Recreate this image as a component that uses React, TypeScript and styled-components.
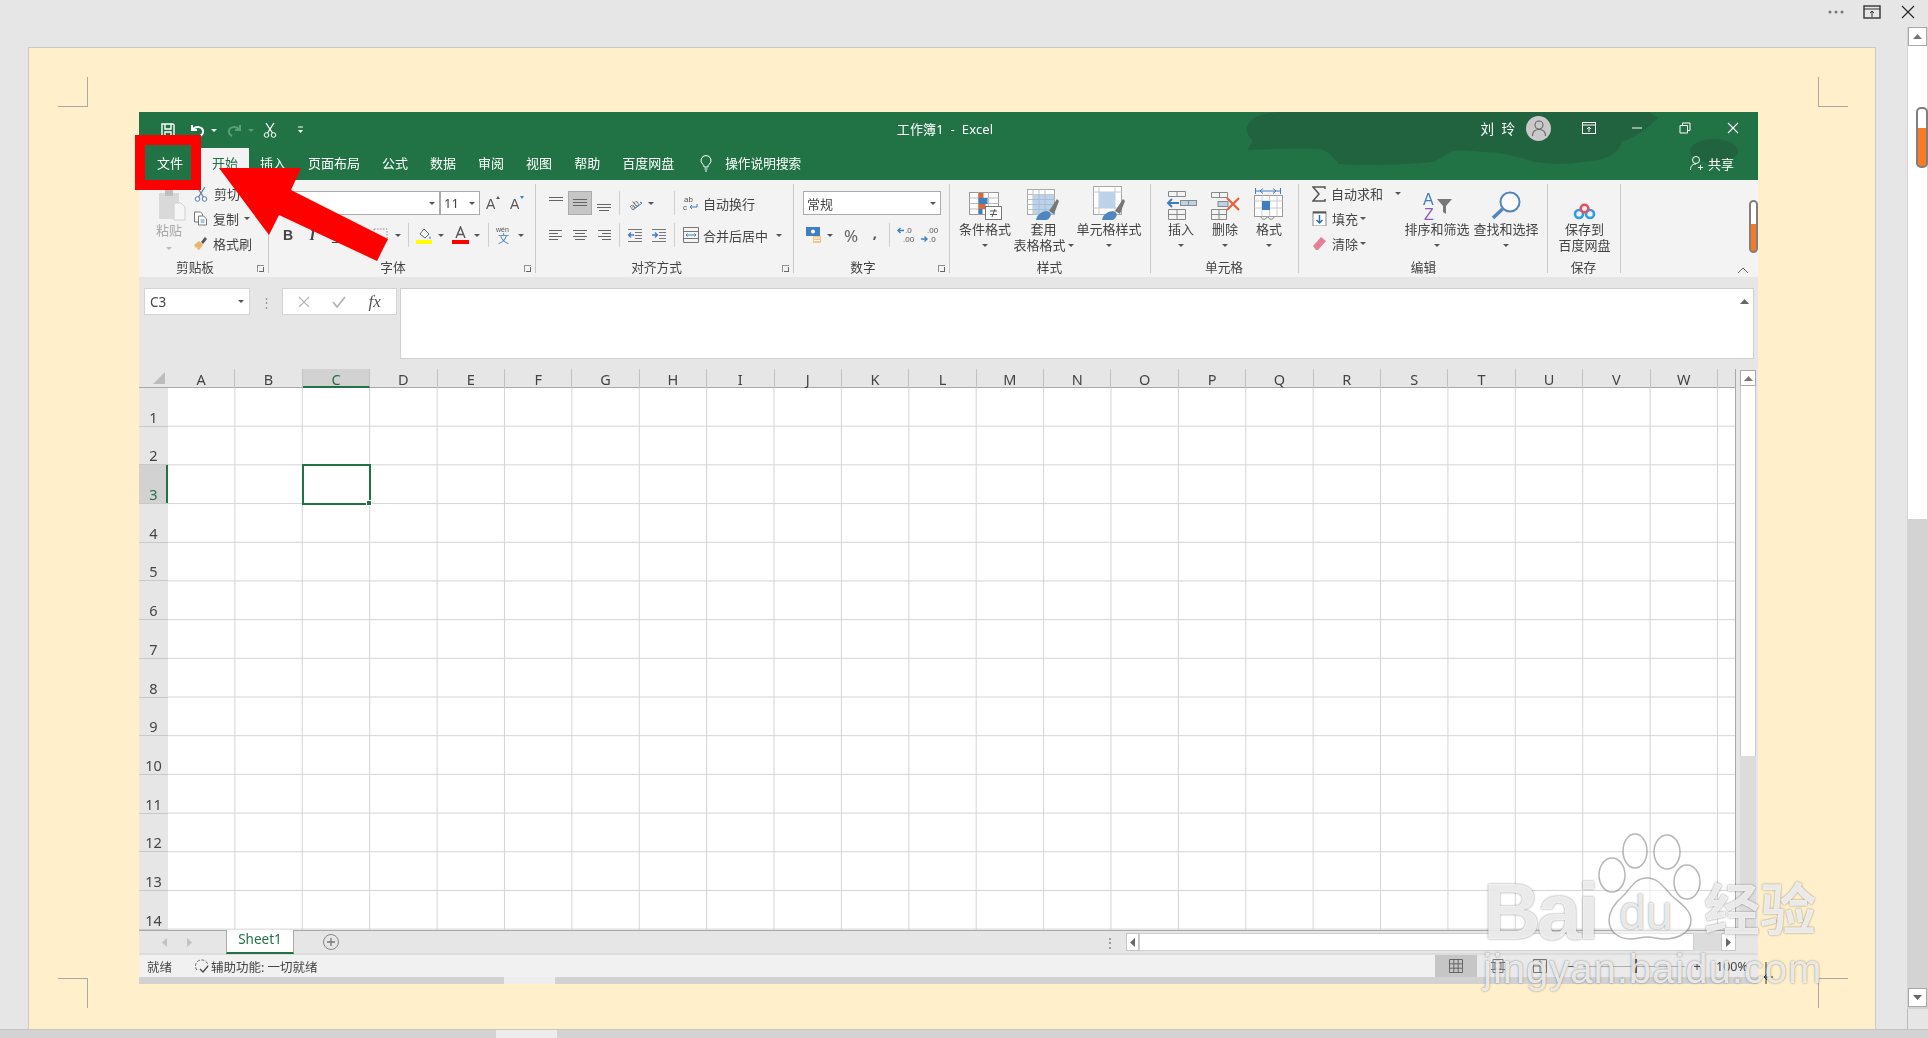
import React from "react";
import styled, { createGlobalStyle } from "styled-components";

const Global = createGlobalStyle`
  html, body { margin: 0; padding: 0; width: 1928px; height: 1038px; overflow: hidden; background: #e6e6e6; }
  body { font-family: "Noto Sans", "Noto Sans CJK SC", sans-serif; }
  svg { display: block; flex: none; }
`;

const Page = styled.div`position: relative; width: 1928px; height: 1038px; display: flex; flex-direction: column; background: #e6e6e6; overflow: hidden;`;
const WinBar = styled.div`height: 47px; display: flex; justify-content: flex-end; align-items: flex-start; padding-top: 4px; box-sizing: border-box;`;
const WinSlot = styled.div<{ $w: number }>`width: ${p => p.$w}px; height: 16px; display: flex; align-items: center; justify-content: center;`;
const Main = styled.div`height: 982px; display: flex;`;
const Gutter = styled.div`width: 28px;`;
const Doc = styled.div`
  position: relative; width: 1848px; box-sizing: border-box; height: 982px; background: #fff0cb;
  border: 1px solid #c8c8c8; border-width: 1px 1px 0 1px; padding: 64px 0 0 110px;
`;
const Mark = styled.div<{ $l: number; $t: number; $bl?: boolean; $br?: boolean; $bt?: boolean; $bb?: boolean }>`
  position: absolute; left: ${p => p.$l}px; top: ${p => p.$t}px; width: 30px; height: 30px; box-sizing: border-box;
  border: 0 solid #aaa9a6;
  ${p => p.$bl && "border-left-width: 1px;"} ${p => p.$br && "border-right-width: 1px;"}
  ${p => p.$bt && "border-top-width: 1px;"} ${p => p.$bb && "border-bottom-width: 1px;"}
`;
const RightGutter = styled.div`width: 31px; border-right: 1px solid #b9b9b9; box-sizing: content-box; margin-right: -1px;`;
const OuterScroll = styled.div`position: relative; width: 21px; height: 982px; box-sizing: border-box; display: flex; flex-direction: column; margin-top: -20px; background: #d3d3d3; padding: 0 0 2px 1px;`;
const OuterTrack = styled.div`height: 473px; width: 19px; background: #fff;`;
const ScrollBtn = styled.div<{ $w: number; $h: number }>`width: ${p => p.$w}px; height: ${p => p.$h}px; background: #fff; border: 1px solid #a8a8a8; box-sizing: border-box; display: flex; align-items: center; justify-content: center; flex: none;`;
const Spacer = styled.div`flex: 1;`;
const OrangeThumb = styled.div<{ $l: number; $t: number; $w: number; $h: number; $fill: number }>`
  position: absolute; left: ${p => p.$l}px; top: ${p => p.$t}px; width: ${p => p.$w}px; height: ${p => p.$h}px; box-sizing: border-box;
  border: 2px solid #7f7f7f; border-radius: 5px; background: linear-gradient(#fff ${p => p.$fill}%, #f97a24 ${p => p.$fill}%);
`;
const BottomBar = styled.div`position: absolute; left: 0; right: 0; bottom: 0; height: 9px; background: #d3d3d3; border-top: 1px solid #c4c4c4; box-sizing: border-box;`;
const BottomThumb = styled.div`width: 61px; height: 100%; margin-left: 496px; background: #ececec;`;

const Excel = styled.div`
  width: 1619px; height: 872px; display: flex; flex-direction: column; filter: blur(0.35px); background: #e6e6e6;
  color: #444;
`;
const Head = styled.div`position: relative; height: 68px; background: #217346; color: #fff;`;
const Blob = styled.svg`position: absolute; left: 1091px; top: 0; pointer-events: none;`;
const TitleRow = styled.div`position: relative; height: 36px; display: flex; align-items: center; font-size: 13px;`;
const Qat = styled.div`display: flex; align-items: center; padding-left: 19px; width: 560px; box-sizing: border-box;`;
const Title = styled.div`width: 492px; text-align: center; font-size: 13px; letter-spacing: .1px; margin-top: -4px; white-space: pre;`;
const TitleRight = styled.div`flex: 1; display: flex; align-items: center; justify-content: flex-end; padding-right: 1px; margin-top: -4px;`;
const UserName = styled.div`font-size: 13.5px; letter-spacing: 2px; margin-right: 9px;`;
const Avatar = styled.div`width: 25px; height: 25px; border-radius: 50%; background: #c9c9c9; display: flex; align-items: center; justify-content: center; margin-right: 14px;`;
const Slot = styled.div<{ $w: number; $ml?: number }>`width: ${p => p.$w}px; margin-left: ${p => p.$ml ?? 0}px; height: 100%; flex: none; display: flex; align-items: center; justify-content: center; color: #444;`;
const WhiteSlot = styled(Slot)`color: #fff; height: 24px;`;
const TabRow = styled.div`position: relative; height: 32px; display: flex; align-items: stretch; padding-left: 7px; font-size: 13px;`;
const Tab = styled.div<{ $active?: boolean; $mr?: number }>`
  padding: 0 11px 3px; display: flex; align-items: center; margin-right: ${p => p.$mr ?? 0}px;
  ${p => p.$active ? "background: #f3f3f3; color: #217346;" : ""}
`;
const Tell = styled.div`display: flex; align-items: center; margin-left: 14px; gap: 12px; font-size: 12.7px; padding-bottom: 3px;`;
const Share = styled.div`margin-left: auto; margin-right: 24px; display: flex; align-items: center; gap: 3px; font-size: 13px; padding-bottom: 2px;`;

const Ribbon = styled.div`position: relative; height: 97px; background: #f3f3f3; display: flex; box-sizing: border-box;`;
const Group = styled.div<{ $w: number }>`
  position: relative; width: ${p => p.$w}px; flex: none; box-sizing: border-box; display: flex; flex-direction: column;
  &::after { content: ""; position: absolute; right: 0; top: 4px; bottom: 4px; width: 1px; background: #c9c9c9; }
`;
const GroupBody = styled.div<{ $pl?: number }>`flex: 1; min-height: 0; display: flex; padding-left: ${p => p.$pl ?? 0}px;`;
const GroupLabel = styled.div<{ $pr?: number }>`height: 17px; line-height: 15px; padding-right: ${p => p.$pr ?? 0}px; text-align: center; font-size: 12.7px; color: #444;`;
const Launcher = styled.div`position: absolute; right: 5px; bottom: 5px; width: 7px; height: 7px; border: 1px solid #8f8f8f; box-sizing: border-box; border-width: 1px 0 0 1px; &::after { content: ""; position: absolute; right: 0; bottom: 0; width: 4px; height: 4px; border: solid #666; border-width: 0 1px 1px 0; }`;
const Caret = styled.span<{ $c?: string; $ml?: number; $mt?: number }>`display: inline-block; flex: none; width: 0; height: 0; margin-left: ${p => p.$ml ?? 0}px; margin-top: ${p => p.$mt ?? 0}px; border: 3px solid transparent; border-top: 3px solid ${p => p.$c ?? "#555"}; border-bottom: 0;`;
const PasteCol = styled.div`width: 38px; display: flex; flex-direction: column; align-items: center; padding: 9px 10px 0 0; box-sizing: border-box; color: #a8a8a8; font-size: 13px; line-height: 18px;`;
const SmallCol = styled.div<{ $w?: number }>`display: flex; flex-direction: column; padding-top: 1px; ${p => p.$w ? `width: ${p.$w}px;` : ""} flex: none;`;
const SmallRow = styled.div`height: 25px; display: flex; align-items: center; gap: 5px; font-size: 13px; color: #444; white-space: nowrap;`;
const Rows = styled.div`display: flex; flex-direction: column; padding-top: 11px; gap: 8px;`;
const ToolRow = styled.div`height: 24px; display: flex; align-items: center; font-size: 13px; white-space: nowrap;`;
const ComboBox = styled.div<{ $w: number; $ml?: number; $end?: boolean }>`
  width: ${p => p.$w}px; margin-left: ${p => p.$ml ?? 0}px; height: 24px; box-sizing: border-box; background: #fff; border: 1px solid #ababab; flex: none;
  display: flex; align-items: center; justify-content: ${p => p.$end ? "flex-end" : "space-between"}; padding: 0 4px 0 3px; font-size: 13px; color: #444;
`;
const Sep = styled.div<{ $ml?: number; $mr?: number }>`width: 1px; height: 24px; background: #cfcfcf; flex: none; margin-left: ${p => p.$ml ?? 0}px; margin-right: ${p => p.$mr ?? 0}px;`;
const Selected = styled(Slot)`background: #c6c6c6; border: 1px solid #ababab; box-sizing: border-box;`;
const BoldB = styled.b`font-family: "Liberation Sans", sans-serif; font-size: 14px;`;
const ItalicI = styled.i`font-family: "Liberation Serif", serif; font-size: 15px; font-weight: 700;`;
const UnderU = styled.u`font-size: 14px;`;
const Pctg = styled.span`font-size: 17px; color: #666;`;
const Comma = styled.b`font-size: 15px; color: #555; margin-top: -6px;`;
const BigBtn = styled.div<{ $w: number }>`width: ${p => p.$w}px; flex: none; display: flex; flex-direction: column; align-items: center; padding-top: 6px; box-sizing: border-box; font-size: 13px; line-height: 17px; color: #444; white-space: nowrap;`;
const BigIcon = styled.div`height: 34px; display: flex; align-items: flex-end; justify-content: center; margin-bottom: 1px;`;
const BtnLine = styled.div`height: 16.5px; display: flex; align-items: center; justify-content: center; gap: 2px;`;
const RibbonEnd = styled.div`flex: 1;`;
const Collapse = styled.div`position: absolute; right: 9px; bottom: 3px;`;
const FormulaBar = styled.div`height: 92px; display: flex; align-items: flex-start; padding: 11px 0 0 5px; box-sizing: border-box; background: #e6e6e6;`;
const NameBox = styled.div`width: 106px; height: 27px; background: #fff; border: 1px solid #d4d4d4; box-sizing: border-box; display: flex; align-items: center; justify-content: space-between; padding: 0 5px; font-size: 13.5px; color: #444;`;
const Dots = styled.div`width: 32px; height: 27px; display: flex; align-items: center; justify-content: center; color: #999; font-size: 13px;`;
const FxBox = styled.div`width: 115px; height: 27px; background: #fff; border: 1px solid #d4d4d4; box-sizing: border-box; display: flex; align-items: center; justify-content: space-around; padding: 0 4px;`;
const Fx = styled.span`font-family: "Liberation Serif", serif; font-style: italic; font-size: 17px; line-height: 22px; color: #555;`;
const Input = styled.div`width: 1354px; height: 71px; margin-left: 3px; background: #fff; border: 1px solid #cfcfcf; box-sizing: border-box; display: flex; justify-content: flex-end; padding: 9px 4px 0 0;`;
const SheetArea = styled.div`height: 561px; display: flex;`;
const SheetMain = styled.div`width: 1597px; display: flex; flex-direction: column; border-right: 1px solid #a9a9a9; box-sizing: border-box;`;
const ColHead = styled.div`height: 18px; display: flex; border-bottom: 1px solid #a9a9a9; box-sizing: content-box;`;
const Corner = styled.div`width: 29px; flex: none; position: relative; &::after { content: ""; position: absolute; right: 3px; bottom: 3px; border: 6px solid #bcbcbc; border-top-color: transparent; border-left-color: transparent; }`;
const ColCell = styled.div<{ $on?: boolean }>`
  width: 67.4px; flex: none; box-sizing: border-box; text-align: center; font-size: 14.5px; line-height: 20px; height: 19px;
  border-right: 1px solid #c2c2c2;
  ${p => p.$on ? "background: #d2d2d2; color: #217346; border-bottom: 2px solid #217346;" : "color: #444;"}
`;
const SheetBody = styled.div`flex: 1; display: flex; min-height: 0; overflow: hidden;`;
const RowHead = styled.div`width: 29px; flex: none; border-right: 1px solid #a9a9a9; box-sizing: content-box; margin-right: -1px;`;
const RowCell = styled.div<{ $on?: boolean }>`
  height: 38.7px; box-sizing: border-box; display: flex; align-items: flex-end; justify-content: center; font-size: 14.5px; line-height: 17px;
  border-bottom: 1px solid #c9c9c9;
  ${p => p.$on ? "background: #d2d2d2; color: #217346; box-shadow: inset -2px 0 0 #217346;" : "color: #444;"}
`;
const Grid = styled.div`
  position: relative; flex: 1; background-color: #fff;
  background-image: linear-gradient(to right, #d4d4d4 1px, transparent 1px), linear-gradient(to bottom, #d4d4d4 1px, transparent 1px);
  background-size: 67.4px 38.7px; background-position: -1px -1px;
`;
const Cursor = styled.div`position: absolute; left: 133.8px; top: 76.4px; width: 69.4px; height: 40.7px; box-sizing: border-box; border: 2px solid #217346; &::after { content: ""; position: absolute; right: -3px; bottom: -3px; width: 4px; height: 4px; background: #217346; border: 1px solid #fff; box-sizing: content-box; }`;
const VScroll = styled.div`width: 22px; flex: none; padding: 1px 0 0 4px; box-sizing: border-box; display: flex; flex-direction: column;`;
const VTrack = styled.div`width: 16px; height: 370px; background: #fff; border: 1px solid #c9c9c9; border-width: 0 1px; box-sizing: border-box;`;
const VRest = styled.div`width: 16px; flex: 1; background: #dcdcdc;`;
const TabsBar = styled.div`height: 25px; display: flex; align-items: stretch; border-top: 1px solid #a9a9a9; box-sizing: border-box; border-bottom: 2px solid #dcdcdc;`;
const NavArrows = styled.div`width: 87px; display: flex; align-items: center; gap: 18px; padding-left: 22px; box-sizing: border-box;`;
const SheetTab = styled.div`width: 68px; margin-top: -1px; height: 24px; box-sizing: border-box; background: #fff; border: 1px solid #a9a9a9; border-width: 0 1px; border-bottom: 2px solid #217346; color: #217346; font-size: 13.5px; text-align: center; line-height: 19px;`;
const AddSheet = styled.div`margin-left: 28px; display: flex; align-items: center;`;
const HScrollZone = styled.div`margin-left: auto; display: flex; align-items: center; width: 657px; padding-right: 22px; box-sizing: border-box;`;
const HDots = styled.div`width: 18px; margin-right: 7px; color: #777; font-size: 12px; text-align: center;`;
const HBtn = styled.div<{ $w: number }>`width: ${p => p.$w}px; height: 18px; background: #fff; border: 1px solid #c6c6c6; box-sizing: border-box; display: flex; align-items: center; justify-content: center; flex: none;`;
const HThumb = styled.div`width: 555px; height: 18px; background: #fff; border: 1px solid #cfcfcf; box-sizing: border-box;`;
const HRest = styled.div`flex: 1; height: 18px; background: #dcdcdc;`;
const StatusBar = styled.div`height: 22px; background: #f1f1f1; display: flex; align-items: center; font-size: 12.5px; color: #444; padding-left: 8px;`;
const Access = styled.div`display: flex; align-items: center; margin-left: 22px; gap: 1px;`;
const StatusRight = styled.div`margin-left: auto; height: 100%; display: flex; align-items: center; width: 323px; background: #eaeaea;`;
const ViewOn = styled.div`width: 42px; height: 100%; background: #c6c6c6; display: flex; align-items: center; justify-content: center; flex: none;`;
const ZoomTrack = styled.div`position: relative; width: 102px; height: 1px; background: #b0b0b0; margin: 0 5px; flex: none; &::after { content: ""; position: absolute; left: 49px; top: -7px; width: 5px; height: 14px; background: #555; }`;
const Pct = styled.div`font-size: 12.5px; margin-left: 12px; white-space: nowrap;`;
const Strip = styled.div`height: 7px; background: #d2d2d2; padding-left: 365px;`;
const StripThumb = styled.div`width: 51px; height: 100%; background: #eeeeee;`;

const Overlay = styled.div`position: absolute; inset: 0; pointer-events: none;`;
const RedBox = styled.div`position: absolute; left: 135px; top: 135px; width: 66px; height: 55px; border: 10px solid #ff0000; box-sizing: border-box;`;
const ArrowSvg = styled.svg`position: absolute; left: 0; top: 0;`;
const Wm = styled.div<{ $l: number; $t: number; $s: number; $b?: boolean; $ls?: number }>`
  position: absolute; left: ${p => p.$l}px; top: ${p => p.$t}px; font-family: "Liberation Sans", "Noto Sans CJK SC", sans-serif;
  font-size: ${p => p.$s}px; line-height: 1; font-weight: ${p => p.$b ? 700 : 400}; white-space: nowrap; letter-spacing: ${p => p.$ls ?? 0}px;
  color: rgba(255,255,255,.84); text-shadow: 0 0 2px rgba(70,70,70,.7);
`;

/* ---------- icons ---------- */
const Svg: React.FC<{ w: number; h?: number; vb?: string; children: React.ReactNode }> = ({ w, h, vb, children }) => (
  <svg width={w} height={h ?? w} viewBox={vb ?? `0 0 ${w} ${h ?? w}`} fill="none">{children}</svg>
);
const SaveIco = () => <Svg w={16}><path d="M2 2h11l1 1v11H2z M5 2v5h6V2 M5 14v-4h6v4" stroke="#fff" strokeWidth="1.4" /></Svg>;
const UndoIco = ({ c = "#fff" }: { c?: string }) => <Svg w={16}><path d="M2 3v5h5" stroke={c} strokeWidth="2" /><path d="M3 7c3-3 9-2.500 10 1.500 .5 2.500-1 4.500-3 5.500" stroke={c} strokeWidth="2" /></Svg>;
const RedoIco = () => <Svg w={16}><path d="M14 3v5H9" stroke="#5c9c77" strokeWidth="2" /><path d="M13 7C10 4 4 4.500 3 8.500c-.5 2.500 1 4.500 3 5.500" stroke="#5c9c77" strokeWidth="2" /></Svg>;
const CutIco = ({ c = "#fff" }: { c?: string }) => <Svg w={16}><path d="M4 1l6.500 10M12 1L5.500 11" stroke={c} strokeWidth="1.300" /><circle cx="4.500" cy="13" r="2.300" stroke={c} /><circle cx="11.500" cy="13" r="2.300" stroke={c} /></Svg>;
const CustIco = () => <Svg w={7} h={8}><path d="M1 1h5" stroke="#fff" /><path d="M1 4h5L3.500 7z" fill="#fff" /></Svg>;
const LayoutIco = () => <Svg w={14}><rect x=".5" y="1.500" width="13" height="11" stroke="#fff" /><path d="M.5 4h13" stroke="#fff" /><path d="M7 11V6M5 8l2-2 2 2" stroke="#fff" /></Svg>;
const MinIco = () => <Svg w={12}><path d="M1 6h10" stroke="#fff" /></Svg>;
const RestoreIco = () => <Svg w={12}><path d="M1 3.500h7.500V11H1zM3.500 3V1H11v7.500H8.500" stroke="#fff" /></Svg>;
const CloseIco = ({ c = "#fff", s = 12 }: { c?: string; s?: number }) => <Svg w={s}><path d={`M1 1L${s - 1} ${s - 1}M${s - 1} 1L1 ${s - 1}`} stroke={c} strokeWidth="1.100" /></Svg>;
const AvatarIco = () => <Svg w={18}><circle cx="9" cy="6" r="4" stroke="#666" strokeWidth="1.100" /><path d="M2.500 17c0-5 3-6.500 6.500-6.500s6.500 1.500 6.500 6.500" stroke="#666" strokeWidth="1.100" /></Svg>;
const BulbIco = () => <Svg w={14} h={18}><path d="M7 1.500a5 5 0 0 0-3 9c.8.8 1 1.500 1 2.500h4c0-1 .2-1.700 1-2.500a5 5 0 0 0-3-9z" stroke="#fff" /><path d="M5.500 15h3M6 17h2" stroke="#fff" /></Svg>;
const ShareIco = () => <Svg w={16}><circle cx="7" cy="5" r="3.500" stroke="#fff" /><path d="M1.500 15c0-4 2-6 5.500-6" stroke="#fff" /><path d="M11.500 10v5M9 12.500h5" stroke="#fff" /></Svg>;
const PasteIco = () => <Svg w={34} h={32}><rect x="7" y="4" width="20" height="26" fill="#d9d9d9" /><rect x="13" y="1" width="8" height="6" fill="#bdbdbd" /><path d="M22 14h7l4 4v13H22z" fill="#f6f6f6" stroke="#d0d0d0" /></Svg>;
const CopyIco = () => <Svg w={15}><path d="M1.500 1h6l2 2v8h-8z" fill="#fff" stroke="#777" /><path d="M5.500 5h5l3 3v6h-8z" fill="#fff" stroke="#777" /><path d="M7.500 9h4M7.500 11h4" stroke="#4f8fcb" /></Svg>;
const BrushIco = () => <Svg w={15}><path d="M1 9l5-4 4 4-4 5-2-1 1-2-2 1z" fill="#e8b66d" /><path d="M8 6l4-5 2 2-4 5z" fill="#555" /></Svg>;
const BigA = ({ up }: { up?: boolean }) => <Svg w={16}><text x="1" y="14" fontSize="14" fill="#555" fontFamily="Liberation Sans">A</text><path d={up ? "M11 4l2-3 2 3z" : "M11 1l2 3 2-3z"} fill={up ? "#555" : "#3f7fbf"} /></Svg>;
const BorderIco = () => <Svg w={15}><rect x="1" y="1" width="13" height="13" stroke="#888" strokeDasharray="1.500 1.500" /></Svg>;
const FillIco = () => <Svg w={18}><path d="M5 8l4-5 5 5-4 4z" fill="#fff" stroke="#666" /><path d="M15 10c1 1.500 1 3 0 3s-1-1.500 0-3z" fill="#4f8fcb" /><rect x="1" y="14" width="16" height="4" fill="#ffff00" /></Svg>;
const FontColor = () => <Svg w={17} h={18}><path d="M4 12L8.500 1 13 12M5.500 8.500h6" stroke="#555" strokeWidth="1.400" /><rect x="0" y="14" width="17" height="4" fill="#ff0000" /></Svg>;
const WenIco = () => <Svg w={16} h={20}><text x="0" y="7" fontSize="7" fill="#555" fontFamily="Liberation Sans">wén</text><text x="2" y="18" fontSize="11" fill="#3f7fbf" fontFamily="Noto Sans CJK SC">文</text></Svg>;
const Lines = ({ a }: { a: "l" | "c" | "r" | "t" | "m" | "b" }) => {
  const pos: Record<string, number[][]> = {
    t: [[1, 2, 15], [1, 5, 15]], m: [[1, 4, 15], [1, 7, 15], [1, 10, 15]], b: [[1, 9, 15], [1, 12, 15], [3, 15, 13]],
    l: [[1, 3, 14], [1, 6, 10], [1, 9, 14], [1, 12, 10]], c: [[1, 3, 15], [3, 6, 13], [1, 9, 15], [3, 12, 13]], r: [[2, 3, 15], [6, 6, 15], [2, 9, 15], [6, 12, 15]],
  };
  return <Svg w={16}>{pos[a].map(([x, y, e], i) => <path key={i} d={`M${x} ${y + .5}H${e}`} stroke="#666" />)}</Svg>;
};
const OrientIco = () => <Svg w={17}><text x="1" y="12" fontSize="9" fill="#666" transform="rotate(-40 8 8)" fontFamily="Liberation Sans">ab</text><path d="M6 15l9-7-2-1" stroke="#3f7fbf" /></Svg>;
const IndentIco = ({ out }: { out?: boolean }) => <Svg w={16}><path d="M1 2.500h14M8 5.500h7M8 8.500h7M8 11.500h7M1 14.500h14" stroke="#777" /><path d={out ? "M7 8H2m2-2.500L1.500 8 4 10.500" : "M1 8h5M4 5.500L6.500 8 4 10.500"} stroke="#3f7fbf" strokeWidth="1.300" /></Svg>;
const WrapIco = () => <Svg w={16}><text x="1" y="7" fontSize="8" fill="#555" fontFamily="Liberation Sans">ab</text><text x="0" y="15" fontSize="8" fill="#555" fontFamily="Liberation Sans">c</text><path d="M14 9v3H7m2-2l-2 2 2 2" stroke="#3f7fbf" /></Svg>;
const MergeIco = () => <Svg w={17} h={18}><path d="M.5 1.500h15v15H.5zM.5 5.500h15M.5 12.500h15" stroke="#777" /><path d="M3 9h10M4.500 7.500L3 9l1.500 1.500M11.500 7.500L13 9l-1.500 1.500" stroke="#3f7fbf" /></Svg>;
const CurrencyIco = () => <Svg w={18}><rect x="1" y="1" width="14" height="9" fill="#3f7fbf" /><circle cx="8" cy="5.500" r="2" fill="#fff" /><path d="M8 10h8v7H8z" fill="#f0c78a" /><path d="M9 12h6M9 14.500h6" stroke="#fff" /></Svg>;
const DecIco = ({ inc }: { inc?: boolean }) => <Svg w={19} h={18}><text x={inc ? 6 : 8} y="7" fontSize="8" fill="#555" fontFamily="Liberation Sans">{inc ? ".00" : ".0"}</text><text x={inc ? 8 : 6} y="16" fontSize="8" fill="#555" fontFamily="Liberation Sans">{inc ? ".0" : ".00"}</text><path d={inc ? "M0 13h6M3.500 10.500L6 13l-2.500 2.500" : "M7 4.500H1M3.500 2L1 4.500 3.500 7"} stroke="#3f7fbf" strokeWidth="1.400" /></Svg>;
const CondIco = () => <Svg w={33} h={28}><rect x=".5" y=".5" width="29" height="22" fill="#fff" stroke="#999" /><path d="M.5 6h29M.5 11.500h29M.5 17h29M9.500 .5v22M19.500 .5v22" stroke="#bbb" /><rect x="9.500" y="1" width="5" height="5" fill="#d9683a" /><rect x="9.500" y="6" width="9" height="6" fill="#3f7fbf" /><rect x="9.500" y="12" width="7" height="5" fill="#d9683a" /><rect x="9.500" y="17" width="4" height="5" fill="#3f7fbf" /><rect x="16.500" y="14.500" width="16" height="13" fill="#fff" stroke="#777" /><path d="M21 19h7M21 22.500h7M26 17l-3 8" stroke="#555" /></Svg>;
const Brush = ({ x = 0 }: { x?: number }) => <g transform={`translate(${x} 0)`}><path d="M21 22l8-12 2 2-5 13z" fill="#777" /><path d="M8 31c1-6 7-9 11-9 3 1 5 3 3 6-1 1-2 3-4 3z" fill="#4f86c0" /></g>;
const TableIco = () => <Svg w={33} h={31}><rect x=".5" y=".5" width="27" height="25" fill="#fff" stroke="#a8a8a8" /><path d="M.5 5.500h27M.5 10.500h27M.5 15.500h27M.5 20.500h27M6 .5v25M12 .5v25M18 .5v25" stroke="#bfbfbf" /><rect x="6" y="5.500" width="21" height="20" fill="#bcd2e8" /><path d="M6 10.500h21M6 15.500h21M6 20.500h21M12 5.500v20M18 5.500v20" stroke="#a7bed6" /><Brush x={1} /></Svg>;
const StyleIco = () => <Svg w={33} h={34}><rect x=".5" y=".5" width="28" height="28" fill="#fff" stroke="#a8a8a8" /><path d="M.5 6h28M.5 22h28M6 .5v28M22 .5v28" stroke="#c8c8c8" /><rect x="6" y="6" width="16" height="16" fill="#bcd2e8" /><g transform="translate(1 3)"><Brush /></g></Svg>;
const InsertIco = () => <Svg w={31} h={30}><path d="M2.500 1.500h17v5h-17zM11 1.500v5M2.500 19.500h17v10h-17zM2.500 24.500h17M11 19.500v10" stroke="#888" /><rect x="14.500" y="10.500" width="16" height="5" fill="#bcd2e8" stroke="#888" /><path d="M22.500 10.500v5" stroke="#888" /><path d="M13 13H2m4-4l-4 4 4 4" stroke="#3f7fbf" strokeWidth="2" /></Svg>;
const DeleteIco = () => <Svg w={31} h={29}><path d="M1.500 1.500h16v5h-16zM9.500 1.500v5M1.500 18.500h15v10h-15zM1.500 23.500h15M9 18.500v10" stroke="#888" /><rect x="8" y="10.500" width="10" height="5" fill="#bcd2e8" stroke="#888" /><path d="M17 7l12 12M29 7L17 19" stroke="#e8603c" strokeWidth="2.200" /></Svg>;
const FormatIco = () => <Svg w={30} h={32}><path d="M2 3h24M1.500 0v6M26.500 0v6" stroke="#3f7fbf" /><path d="M6 3l3-2.500M6 3l3 2.500M22 3l-3-2.500M22 3l-3 2.500" stroke="#3f7fbf" /><rect x=".5" y="7.500" width="28" height="21" fill="#fff" stroke="#999" /><path d="M.5 13h28M.5 20h28M8 7.500v21M15.500 7.500v21M23 7.500v21" stroke="#ccc" /><rect x="8" y="13" width="8" height="9" fill="#3f7fbf" /><path d="M7 29c1 3 5 3 6 0M14 29c1 3 5 3 6 0" stroke="#888" /></Svg>;
const SigmaIco = () => <Svg w={14} h={16}><path d="M13 3V1H1l6 7-6 7h12v-2" stroke="#555" strokeWidth="1.500" /></Svg>;
const FillDown = () => <Svg w={15}><rect x="1" y="1" width="13" height="14" fill="#fff" stroke="#888" /><path d="M1 1.500h13" stroke="#555" strokeWidth="2" /><path d="M7.500 4v8M4.500 9l3 3 3-3" stroke="#2f6fb0" strokeWidth="1.500" /></Svg>;
const EraseIco = () => <Svg w={15}><path d="M1 10l8-9 5 4-8 9H4z" fill="#e77f97" /></Svg>;
const SortIco = () => <Svg w={29} h={28}><text x="0" y="13" fontSize="16" fill="#3f7fbf" fontFamily="Liberation Sans">A</text><text x="1" y="28" fontSize="16" fill="#8e5bb5" fontFamily="Liberation Sans">Z</text><path d="M14 7h15l-6 7v8l-3-2v-6z" fill="#777" /></Svg>;
const FindIco = () => <Svg w={30} h={29}><circle cx="19" cy="11" r="9.500" fill="#fbfbfb" stroke="#4f86c0" strokeWidth="2" /><path d="M11.500 18L2 27" stroke="#4f86c0" strokeWidth="3.500" /></Svg>;
const CloudIco = () => <Svg w={23} h={17}><circle cx="6" cy="11" r="4" stroke="#2f9be6" strokeWidth="2.600" /><circle cx="17" cy="11" r="4" stroke="#2f9be6" strokeWidth="2.600" /><circle cx="11.500" cy="5.500" r="3.800" stroke="#e8505f" strokeWidth="2.600" /></Svg>;
const Tri = ({ d, c = "#a6a6a6" }: { d: "u" | "d" | "l" | "r"; c?: string }) => {
  const p = { u: "M0 6L4.500 1 9 6z", d: "M0 1l4.500 5L9 1z", l: "M6 0v9L1 4.500z", r: "M1 0v9l5-4.500z" }[d];
  return <Svg w={d === "u" || d === "d" ? 9 : 7} h={d === "u" || d === "d" ? 7 : 9}><path d={p} fill={c} /></Svg>;
};
const AccessIco = () => <Svg w={16}><path d="M3 12A6 6 0 0 1 8 2a6 6 0 0 1 6 6" stroke="#666" strokeDasharray="3 1.500" /><path d="M6 11l3 3 5-6" stroke="#444" strokeWidth="1.200" /></Svg>;
const GridView = () => <Svg w={16}><path d="M1.500 1.500h13v13h-13zM1.500 5.800h13M1.500 10.200h13M5.800 1.500v13M10.200 1.500v13" stroke="#666" /></Svg>;
const PageView = () => <Svg w={16}><path d="M3 1.500h10v13H3zM1 4.500h14M1 11.500h14" stroke="#777" /><rect x="5" y="5" width="6" height="6" stroke="#777" /></Svg>;
const BreakView = () => <Svg w={16}><path d="M1.500 1.500h13v13h-13zM1.500 8h13M8 1.500v13" stroke="#777" /></Svg>;
const AddIco = () => <Svg w={18}><circle cx="9" cy="9" r="7.500" stroke="#888" /><path d="M9 5v8M5 9h8" stroke="#777" strokeWidth="1.300" /></Svg>;

const COLS = "ABCDEFGHIJKLMNOPQRSTUVW".split("");
const ROWS = Array.from({ length: 14 }, (_, i) => i + 1);
const TABS = ["插入", "页面布局", "公式", "数据", "审阅", "视图", "帮助", "百度网盘"];
const PAW = "rgba(255,255,255,.55)";
const PAW_LINE = "rgba(110,110,110,.5)";

export default function App() {
  return (
    <Page>
      <Global />
      <WinBar>
        <WinSlot $w={38}><Svg w={16} h={4}><circle cx="2" cy="2" r="1.500" fill="#777" /><circle cx="8" cy="2" r="1.500" fill="#777" /><circle cx="14" cy="2" r="1.500" fill="#777" /></Svg></WinSlot>
        <WinSlot $w={34}><Svg w={18} h={14}><rect x="1" y="1" width="16" height="12" stroke="#333" strokeWidth="1.400" /><path d="M1 4h16M9 12V6M7 8l2-2 2 2" stroke="#333" /></Svg></WinSlot>
        <WinSlot $w={38}><CloseIco c="#222" s={14} /></WinSlot>
        <WinSlot $w={1} />
      </WinBar>
      <Main>
        <Gutter />
        <Doc>
          <Mark $l={29} $t={29} $br $bb />
          <Mark $l={1789} $t={29} $bl $bb />
          <Mark $l={29} $t={930} $br $bt />
          <Mark $l={1789} $t={930} $bl $bt />
          <Excel>
            <Head>
              <Blob width="530" height="68" viewBox="0 0 530 68" fill="#22633f">
                <path d="M17 15C20 5 32 1 50 0H419L428 6C420 14 408 24 392 30C388 42 378 48 352 50C336 53 318 52 304 50C286 44 270 40 253 40C236 38 226 38 220 40C214 44 208 48 203 50C172 53 136 54 108 52C104 46 100 40 90 37C66 36 40 37 17 38C20 34 22 30 22 28C18 24 16 20 17 15Z" />
                <ellipse cx="484" cy="39" rx="24" ry="12" />
              </Blob>
              <TitleRow>
                <Qat>
                  <WhiteSlot $w={20}><SaveIco /></WhiteSlot>
                  <WhiteSlot $w={18} $ml={11}><UndoIco /></WhiteSlot><Caret $c="#fff" $ml={4} />
                  <WhiteSlot $w={18} $ml={8}><RedoIco /></WhiteSlot><Caret $c="#5c9c77" $ml={5} />
                  <WhiteSlot $w={18} $ml={7}><CutIco /></WhiteSlot>
                  <WhiteSlot $w={10} $ml={16}><CustIco /></WhiteSlot>
                </Qat>
                <Title>工作簿1  -  Excel</Title>
                <TitleRight>
                  <UserName>刘 玲</UserName>
                  <Avatar><AvatarIco /></Avatar>
                  <WhiteSlot $w={48}><LayoutIco /></WhiteSlot>
                  <WhiteSlot $w={48}><MinIco /></WhiteSlot>
                  <WhiteSlot $w={48}><RestoreIco /></WhiteSlot>
                  <WhiteSlot $w={48}><CloseIco /></WhiteSlot>
                </TitleRight>
              </TitleRow>
              <TabRow>
                <Tab $mr={7}>文件</Tab>
                <Tab $active>开始</Tab>
                {TABS.map(t => <Tab key={t}>{t}</Tab>)}
                <Tell><BulbIco />操作说明搜索</Tell>
                <Share><ShareIco />共享</Share>
              </TabRow>
            </Head>
            <Ribbon>
              <Group $w={130}>
                <GroupBody $pl={16}>
                  <PasteCol><PasteIco />粘贴<Caret $c="#bbb" $mt={8} /></PasteCol>
                  <SmallCol>
                    <SmallRow><CutIco c="#5a7fa8" />剪切</SmallRow>
                    <SmallRow><CopyIco />复制<Caret /></SmallRow>
                    <SmallRow><BrushIco />格式刷</SmallRow>
                  </SmallCol>
                </GroupBody>
                <GroupLabel $pr={18}>剪贴板</GroupLabel>
                <Launcher />
              </Group>
              <Group $w={267}>
                <GroupBody>
                  <Rows>
                    <ToolRow>
                      <ComboBox $w={165} $ml={6} $end><Caret /></ComboBox>
                      <ComboBox $w={40}>11<Caret /></ComboBox>
                      <Slot $w={24} $ml={1}><BigA up /></Slot>
                      <Slot $w={24}><BigA /></Slot>
                    </ToolRow>
                    <ToolRow>
                      <Slot $w={24} $ml={7}><BoldB>B</BoldB></Slot>
                      <Slot $w={25}><ItalicI>I</ItalicI></Slot>
                      <Slot $w={24}><UnderU>U</UnderU></Slot>
                      <Slot $w={12}><Caret /></Slot>
                      <Slot $w={22} $ml={8}><BorderIco /></Slot>
                      <Slot $w={11} $ml={1}><Caret /></Slot>
                      <Sep $ml={5} />
                      <Slot $w={24} $ml={3}><FillIco /></Slot>
                      <Slot $w={10}><Caret /></Slot>
                      <Slot $w={24} $ml={2}><FontColor /></Slot>
                      <Slot $w={10}><Caret /></Slot>
                      <Sep $ml={6} />
                      <Slot $w={24} $ml={3}><WenIco /></Slot>
                      <Slot $w={10}><Caret /></Slot>
                    </ToolRow>
                  </Rows>
                </GroupBody>
                <GroupLabel $pr={19}>字体</GroupLabel>
                <Launcher />
              </Group>
              <Group $w={258}>
                <GroupBody>
                  <Rows>
                    <ToolRow>
                      <Slot $w={24} $ml={8}><Lines a="t" /></Slot>
                      <Selected $w={24}><Lines a="m" /></Selected>
                      <Slot $w={24}><Lines a="b" /></Slot>
                      <Sep $ml={3} />
                      <Slot $w={24} $ml={3}><OrientIco /></Slot>
                      <Slot $w={8}><Caret /></Slot>
                      <Sep $ml={19} />
                      <Slot $w={24} $ml={4}><WrapIco /></Slot>
                      自动换行
                    </ToolRow>
                    <ToolRow>
                      <Slot $w={24} $ml={8}><Lines a="l" /></Slot>
                      <Slot $w={24}><Lines a="c" /></Slot>
                      <Slot $w={24}><Lines a="r" /></Slot>
                      <Sep $ml={3} />
                      <Slot $w={24} $ml={3}><IndentIco out /></Slot>
                      <Slot $w={24}><IndentIco /></Slot>
                      <Sep $ml={3} />
                      <Slot $w={24} $ml={4}><MergeIco /></Slot>
                      合并后居中
                      <Caret $ml={8} />
                    </ToolRow>
                  </Rows>
                </GroupBody>
                <GroupLabel $pr={17}>对齐方式</GroupLabel>
                <Launcher />
              </Group>
              <Group $w={156}>
                <GroupBody>
                  <Rows>
                    <ToolRow><ComboBox $w={138} $ml={9}>常规<Caret /></ComboBox></ToolRow>
                    <ToolRow>
                      <Slot $w={22} $ml={9}><CurrencyIco /></Slot>
                      <Slot $w={10}><Caret /></Slot>
                      <Slot $w={24} $ml={4}><Pctg>%</Pctg></Slot>
                      <Slot $w={24}><Comma>,</Comma></Slot>
                      <Sep $ml={2} />
                      <Slot $w={24} $ml={4}><DecIco /></Slot>
                      <Slot $w={24}><DecIco inc /></Slot>
                    </ToolRow>
                  </Rows>
                </GroupBody>
                <GroupLabel $pr={18}>数字</GroupLabel>
                <Launcher />
              </Group>
              <Group $w={201}>
                <GroupBody>
                  <BigBtn $w={70}><BigIcon><CondIco /></BigIcon><BtnLine>条件格式</BtnLine><BtnLine><Caret /></BtnLine></BigBtn>
                  <BigBtn $w={47}><BigIcon><TableIco /></BigIcon><BtnLine>套用</BtnLine><BtnLine>表格格式<Caret /></BtnLine></BigBtn>
                  <BigBtn $w={84}><BigIcon><StyleIco /></BigIcon><BtnLine>单元格样式</BtnLine><BtnLine><Caret /></BtnLine></BigBtn>
                </GroupBody>
                <GroupLabel $pr={2}>样式</GroupLabel>
              </Group>
              <Group $w={148}>
                <GroupBody $pl={8}>
                  <BigBtn $w={44}><BigIcon><InsertIco /></BigIcon><BtnLine>插入</BtnLine><BtnLine><Caret /></BtnLine></BigBtn>
                  <BigBtn $w={44}><BigIcon><DeleteIco /></BigIcon><BtnLine>删除</BtnLine><BtnLine><Caret /></BtnLine></BigBtn>
                  <BigBtn $w={44}><BigIcon><FormatIco /></BigIcon><BtnLine>格式</BtnLine><BtnLine><Caret /></BtnLine></BigBtn>
                </GroupBody>
                <GroupLabel $pr={2}>单元格</GroupLabel>
              </Group>
              <Group $w={249}>
                <GroupBody $pl={13}>
                  <SmallCol $w={90}>
                    <SmallRow><SigmaIco />自动求和<Caret $ml={7} /></SmallRow>
                    <SmallRow><FillDown />填充<Caret $ml={-3} /></SmallRow>
                    <SmallRow><EraseIco />清除<Caret $ml={-3} /></SmallRow>
                  </SmallCol>
                  <BigBtn $w={70}><BigIcon><SortIco /></BigIcon><BtnLine>排序和筛选</BtnLine><BtnLine><Caret /></BtnLine></BigBtn>
                  <BigBtn $w={68}><BigIcon><FindIco /></BigIcon><BtnLine>查找和选择</BtnLine><BtnLine><Caret /></BtnLine></BigBtn>
                </GroupBody>
                <GroupLabel>编辑</GroupLabel>
              </Group>
              <Group $w={73}>
                <GroupBody>
                  <BigBtn $w={73}><BigIcon><CloudIco /></BigIcon><BtnLine>保存到</BtnLine><BtnLine>百度网盘</BtnLine></BigBtn>
                </GroupBody>
                <GroupLabel $pr={2}>保存</GroupLabel>
              </Group>
              <RibbonEnd />
              <OrangeThumb $l={1610} $t={20} $w={9} $h={53} $fill={45} />
              <Collapse><Svg w={12} h={7}><path d="M1 6l5-5 5 5" stroke="#666" /></Svg></Collapse>
            </Ribbon>
            <FormulaBar>
              <NameBox>C3<Caret /></NameBox>
              <Dots>⋮</Dots>
              <FxBox><CloseIco c="#b5b5b5" s={12} /><Svg w={14} h={12}><path d="M1 6l4 5 8-10" stroke="#b5b5b5" strokeWidth="1.800" /></Svg><Fx>fx</Fx></FxBox>
              <Input><Tri d="u" c="#666" /></Input>
            </FormulaBar>
            <SheetArea>
              <SheetMain>
                <ColHead>
                  <Corner />
                  {COLS.map(c => <ColCell key={c} $on={c === "C"}>{c}</ColCell>)}
                </ColHead>
                <SheetBody>
                  <RowHead>{ROWS.map(r => <RowCell key={r} $on={r === 3}>{r}</RowCell>)}</RowHead>
                  <Grid><Cursor /></Grid>
                </SheetBody>
              </SheetMain>
              <VScroll>
                <ScrollBtn $w={16} $h={16}><Tri d="u" c="#777" /></ScrollBtn>
                <VTrack />
                <VRest />
              </VScroll>
            </SheetArea>
            <TabsBar>
              <NavArrows><Tri d="l" c="#c2c2c2" /><Tri d="r" c="#c2c2c2" /></NavArrows>
              <SheetTab>Sheet1</SheetTab>
              <AddSheet><AddIco /></AddSheet>
              <HScrollZone>
                <HDots>⋮</HDots>
                <HBtn $w={13}><Tri d="l" c="#666" /></HBtn>
                <HThumb />
                <HRest />
                <HBtn $w={15}><Tri d="r" c="#666" /></HBtn>
              </HScrollZone>
            </TabsBar>
            <StatusBar>
              就绪
              <Access><AccessIco />辅助功能: 一切就绪</Access>
              <StatusRight>
                <ViewOn><GridView /></ViewOn>
                <Slot $w={20} $ml={11}><PageView /></Slot>
                <Slot $w={20} $ml={22}><BreakView /></Slot>
                <Slot $w={14} $ml={14}>−</Slot>
                <ZoomTrack />
                <Slot $w={14}>+</Slot>
                <Pct>100%</Pct>
              </StatusRight>
            </StatusBar>
            <Strip><StripThumb /></Strip>
          </Excel>
        </Doc>
        <RightGutter />
        <OuterScroll>
          <ScrollBtn $w={19} $h={19}><Tri d="u" c="#777" /></ScrollBtn>
          <OuterTrack />
          <OrangeThumb $l={9} $t={80} $w={12} $h={61} $fill={34} />
          <Spacer />
          <ScrollBtn $w={19} $h={19}><Tri d="d" c="#666" /></ScrollBtn>
        </OuterScroll>
      </Main>
      <BottomBar><BottomThumb /></BottomBar>
      <Overlay>
        <RedBox />
        <ArrowSvg width="1928" height="1038">
          <polygon points="219,168 301,168 291,190 388,239 377,261 279,215 269,235" fill="#ff0000" />
          <ellipse cx="1635" cy="851" rx="12" ry="17" stroke={PAW_LINE} strokeWidth="1.500" fill={PAW} />
          <ellipse cx="1667" cy="852" rx="13" ry="17" stroke={PAW_LINE} strokeWidth="1.500" fill={PAW} />
          <ellipse cx="1612" cy="875" rx="13" ry="17" stroke={PAW_LINE} strokeWidth="1.500" fill={PAW} />
          <ellipse cx="1687" cy="882" rx="13" ry="17" stroke={PAW_LINE} strokeWidth="1.500" fill={PAW} />
          <path d="M1647 878c-12 0-16 10-24 18-8 7-14 14-14 24 0 12 10 19 22 19 6 0 10-2 16-2s11 2 17 2c12 0 27-5 27-19 0-10-11-17-19-24-8-8-13-18-25-18z" stroke={PAW_LINE} strokeWidth="1.500" fill={PAW} />
          <path d="M1766 962v22M1764 977h9M1764 977l3-3M1764 977l3 3" stroke="#333" strokeWidth="1" />
        </ArrowSvg>
        <Wm $l={1483} $t={872} $s={80} $b $ls={-4}>Bai</Wm>
        <Wm $l={1619} $t={889} $s={48}>du</Wm>
        <Wm $l={1704} $t={883} $s={56} $b>经验</Wm>
        <Wm $l={1483} $t={949} $s={40} $ls={1}>jingyan.baidu.com</Wm>
      </Overlay>
    </Page>
  );
}
